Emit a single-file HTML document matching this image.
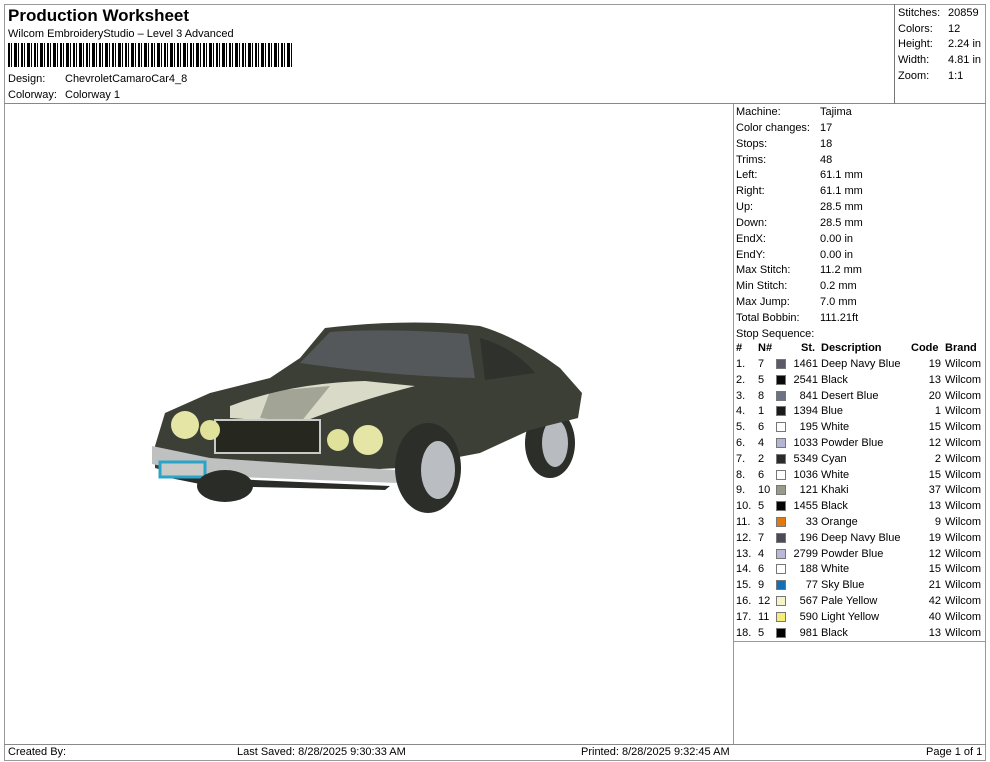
<!DOCTYPE html>
<html><head><meta charset="utf-8"><style>
*{margin:0;padding:0;box-sizing:border-box}
body{width:990px;height:762px;background:#fff;font-family:"Liberation Sans",Arial,sans-serif;font-size:11px;color:#000;position:relative;overflow:hidden}
.a{position:absolute;white-space:nowrap}
.l{position:absolute;background:#999}
.r{position:absolute;left:736px;width:250px;height:16px}
.r span{position:absolute;top:0}
.sw{position:absolute;top:1px;width:10px;height:10px;border:1px solid #777}
</style></head><body>
<div class="l" style="left:4px;top:4px;width:982px;height:1px"></div>
<div class="l" style="left:4px;top:4px;width:1px;height:757px"></div>
<div class="l" style="left:985px;top:4px;width:1px;height:757px"></div>
<div class="l" style="left:4px;top:760px;width:982px;height:1px"></div>
<div class="l" style="left:4px;top:103px;width:982px;height:1px;background:#888"></div>
<div class="l" style="left:894px;top:4px;width:1px;height:100px;background:#777"></div>
<div class="l" style="left:733px;top:104px;width:1px;height:640px"></div>
<div class="l" style="left:733px;top:641px;width:253px;height:1px"></div>
<div class="l" style="left:4px;top:744px;width:982px;height:1px;background:#888"></div>

<div class="a" style="left:8px;top:6px;font-size:17px;font-weight:bold">Production Worksheet</div>
<div class="a" style="left:8px;top:28px">Wilcom EmbroideryStudio – Level 3 Advanced</div>
<div class="a" style="left:8px;top:43px;width:286px;height:24px;background:repeating-linear-gradient(90deg,#000 0 2px,#fff 2px 3px,#000 3px 4px,#fff 4px 6px,#000 6px 9px,#fff 9px 10px,#000 10px 11px,#fff 11px 13px)"></div>
<div class="a" style="left:8px;top:73px">Design:</div><div class="a" style="left:65px;top:73px">ChevroletCamaroCar4_8</div>
<div class="a" style="left:8px;top:89px">Colorway:</div><div class="a" style="left:65px;top:89px">Colorway 1</div>

<div class="a" style="left:898px;top:6px;line-height:15.7px">Stitches:<br>Colors:<br>Height:<br>Width:<br>Zoom:</div>
<div class="a" style="left:948px;top:6px;line-height:15.7px">20859<br>12<br>2.24 in<br>4.81 in<br>1:1</div>

<div class="a" style="left:736px;top:105px;line-height:15.85px">Machine:<br>Color changes:<br>Stops:<br>Trims:<br>Left:<br>Right:<br>Up:<br>Down:<br>EndX:<br>EndY:<br>Max Stitch:<br>Min Stitch:<br>Max Jump:<br>Total Bobbin:<br>Stop Sequence:</div>
<div class="a" style="left:820px;top:105px;line-height:15.85px">Tajima<br>17<br>18<br>48<br>61.1 mm<br>61.1 mm<br>28.5 mm<br>28.5 mm<br>0.00 in<br>0.00 in<br>11.2 mm<br>0.2 mm<br>7.0 mm<br>111.21ft</div>

<div class="r" style="top:342px;font-weight:bold;text-decoration:underline">
<span style="left:0">#</span><span style="left:22px">N#</span><span style="left:65px">St.</span><span style="left:85px">Description</span><span style="left:175px">Code</span><span style="left:209px">Brand</span></div>
<div id="rows"></div>

<div class="a" style="left:8px;top:746px">Created By:</div>
<div class="a" style="left:237px;top:746px">Last Saved: 8/28/2025 9:30:33 AM</div>
<div class="a" style="left:581px;top:746px">Printed: 8/28/2025 9:32:45 AM</div>
<div class="a" style="left:926px;top:746px">Page 1 of 1</div>

<svg class="a" style="left:150px;top:318px" width="440" height="200" viewBox="0 0 440 200">
<ellipse cx="400" cy="125" rx="25" ry="35" fill="#2c2e2a"/><ellipse cx="405" cy="125" rx="13" ry="24" fill="#b8bcc0"/>
<path d="M150 40 L175 10 Q260 0 330 8 Q370 20 410 50 L432 75 L428 100 L380 112 L330 135 L250 150 L40 160 L5 150 L5 128 L15 95 L60 75 L120 60 Z" fill="#3b3f36"/>
<path d="M150 45 L180 14 Q240 10 318 16 L325 60 Q240 58 150 45 Z" fill="#55585a"/>
<path d="M330 20 Q365 30 385 55 L335 62 Z" fill="#2f312c"/>
<path d="M80 88 Q140 65 215 63 L265 68 Q200 85 150 105 L80 100 Z" fill="#d9dac8"/>
<path d="M120 73 L180 68 L150 105 L110 100 Z" fill="#3b3f36" opacity=".35"/>
<rect x="65" y="102" width="105" height="33" fill="#26281f" stroke="#c8cac8" stroke-width="2"/>
<circle cx="35" cy="107" r="14" fill="#e5e6a6"/><circle cx="60" cy="112" r="10" fill="#e0e19a"/>
<circle cx="188" cy="122" r="11" fill="#e0e19a"/><circle cx="218" cy="122" r="15" fill="#e5e6a6"/>
<path d="M2 128 L60 140 L245 152 L248 165 L60 158 L2 146 Z" fill="#bfc1c0"/>
<path d="M10 148 L60 160 L240 168 L235 172 L60 168 L10 158 Z" fill="#2a2c28"/>
<rect x="10" y="144" width="45" height="15" fill="#c9cbc8" stroke="#2aa4c8" stroke-width="3"/>
<ellipse cx="75" cy="168" rx="28" ry="16" fill="#2a2c27"/>
<ellipse cx="278" cy="150" rx="33" ry="45" fill="#2c2e2a"/><ellipse cx="288" cy="152" rx="17" ry="29" fill="#babec2"/>
</svg>

<script>
var d=[["1.","7","#5a5b66","1461","Deep Navy Blue","19"],["2.","5","#0a0a0a","2541","Black","13"],["3.","8","#6a7284","841","Desert Blue","20"],["4.","1","#1a1a1c","1394","Blue","1"],["5.","6","#ffffff","195","White","15"],["6.","4","#b4b4d4","1033","Powder Blue","12"],["7.","2","#2a2a2a","5349","Cyan","2"],["8.","6","#ffffff","1036","White","15"],["9.","10","#9a9a88","121","Khaki","37"],["10.","5","#050505","1455","Black","13"],["11.","3","#e07a10","33","Orange","9"],["12.","7","#4a4b56","196","Deep Navy Blue","19"],["13.","4","#b8b8d8","2799","Powder Blue","12"],["14.","6","#ffffff","188","White","15"],["15.","9","#1070b8","77","Sky Blue","21"],["16.","12","#f4f4c8","567","Pale Yellow","42"],["17.","11","#f6ec78","590","Light Yellow","40"],["18.","5","#000000","981","Black","13"]];
var h="";d.forEach(function(r,i){var t=358+i*15.8;
h+='<div class="r" style="top:'+t+'px"><span style="left:0">'+r[0]+'</span><span style="left:22px">'+r[1]+'</span><div class="sw" style="left:40px;background:'+r[2]+'"></div><span style="left:52px;width:30px;text-align:right">'+r[3]+'</span><span style="left:85px">'+r[4]+'</span><span style="left:170px;width:35px;text-align:right">'+r[5]+'</span><span style="left:209px">Wilcom</span></div>';});
document.getElementById("rows").innerHTML=h;
</script>
</body></html>
